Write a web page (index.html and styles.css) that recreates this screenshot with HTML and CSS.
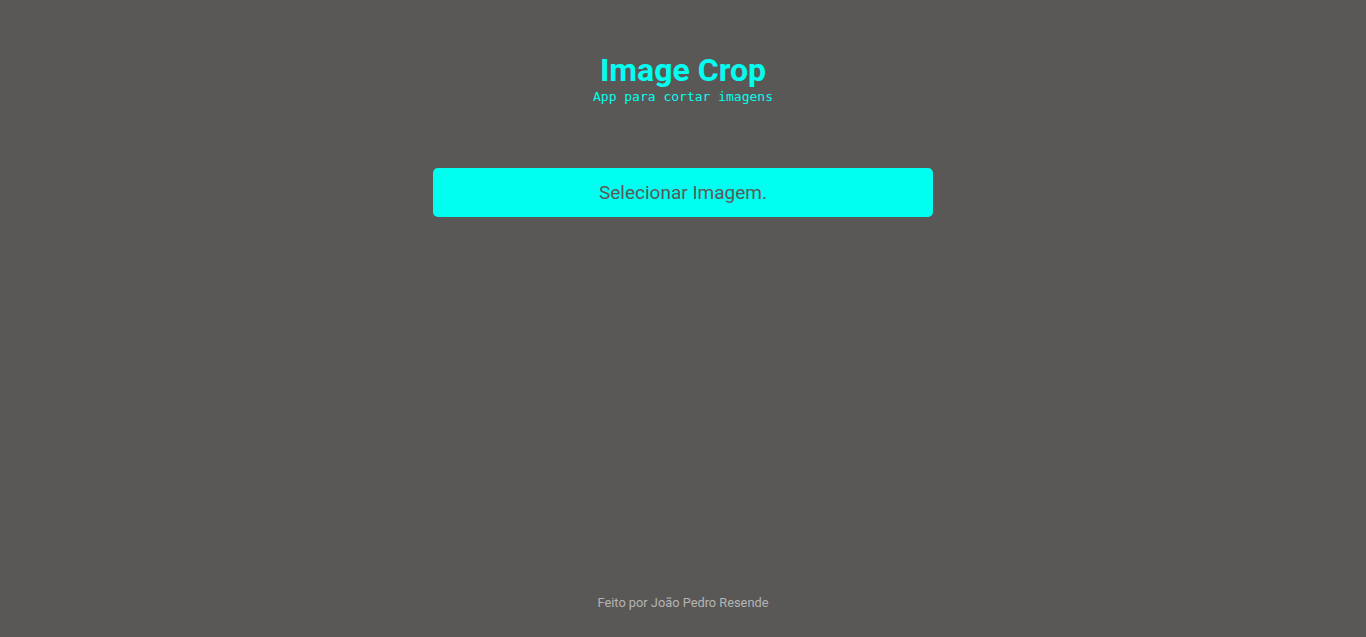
FILE: index.html
```html
<!DOCTYPE html>
<html lang="pt">
<head>
<meta charset="utf-8">
<title>Image Crop</title>
<link rel="stylesheet" href="styles.css">
</head>
<body>
<div class="page">
  <header class="header">
    <h1 class="title">Image Crop</h1>
    <p class="subtitle">App para cortar imagens</p>
  </header>
  <main class="main">
    <button class="select-btn" type="button">Selecionar Imagem.</button>
  </main>
  <footer class="footer">Feito por João Pedro Resende</footer>
</div>
</body>
</html>
```
FILE: styles.css
```css
html, body {
  margin: 0;
  padding: 0;
  height: 100%;
}
body {
  background: #5a5856;
  font-family: Roboto, "Liberation Sans", sans-serif;
}
.page {
  min-height: 100vh;
  display: flex;
  flex-direction: column;
  align-items: center;
}
.header {
  margin-top: 52px;
  display: flex;
  flex-direction: column;
  align-items: center;
}
.title {
  margin: 0;
  font-size: 32px;
  font-weight: 700;
  line-height: 36px;
  color: #00fff0;
}
.subtitle {
  margin: 1px 0 0;
  font-family: "DejaVu Sans Mono", monospace;
  font-size: 13px;
  line-height: 16px;
  color: #00fff0;
}
.main {
  flex: 1;
  margin-top: 63px;
}
.select-btn {
  width: 500px;
  height: 49px;
  border: none;
  border-radius: 5px;
  background: #00fff0;
  color: #5a5856;
  font-family: Roboto, "Liberation Sans", sans-serif;
  font-size: 19px;
  cursor: pointer;
}
.footer {
  font-size: 12.8px;
  color: #b4b4b4;
  line-height: 16px;
  padding-bottom: 26px;
}
```
